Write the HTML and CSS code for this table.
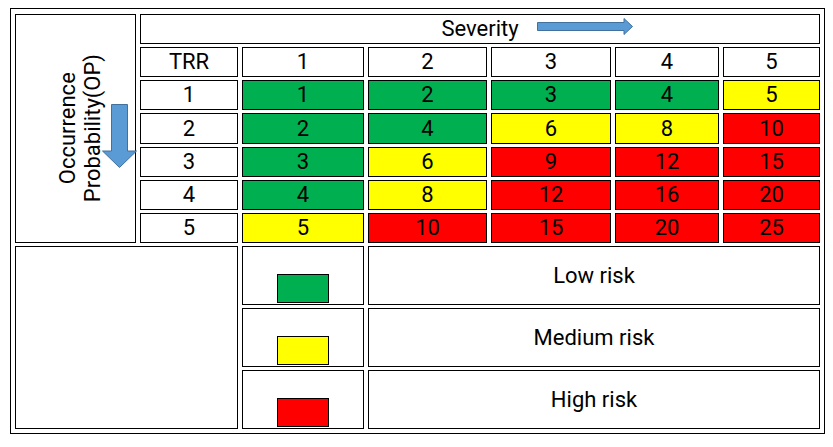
FILE: index.html
```html
<!DOCTYPE html>
<html lang="en">
<head>
<meta charset="utf-8">
<title>Risk matrix</title>
<link rel="stylesheet" href="styles.css">
</head>
<body>
<div class="frame">
  <div class="matrix">
    <div class="cell side">
      <div class="side-text">Occurrence<br>Probability(OP)</div>
      <svg class="down-arrow" width="35" height="64" viewBox="0 0 35 64"><polygon points="9.5,0.5 25.5,0.5 25.5,47 34.5,47 17.5,63.5 0.5,47 9.5,47" fill="#5b9bd5" stroke="#41719c" stroke-width="1"/></svg>
    </div>
    <div class="cell sev">Severity
      <svg class="right-arrow" width="96" height="17" viewBox="0 0 96 17"><polygon points="0.5,4.5 87,4.5 87,0.5 95.5,8.5 87,16.5 87,12.5 0.5,12.5" fill="#5b9bd5" stroke="#41719c" stroke-width="1"/></svg>
    </div>

    <div class="cell">TRR</div>
    <div class="cell">1</div>
    <div class="cell">2</div>
    <div class="cell">3</div>
    <div class="cell">4</div>
    <div class="cell">5</div>

    <div class="cell">1</div>
    <div class="cell g">1</div>
    <div class="cell g">2</div>
    <div class="cell g">3</div>
    <div class="cell g">4</div>
    <div class="cell y">5</div>

    <div class="cell">2</div>
    <div class="cell g">2</div>
    <div class="cell g">4</div>
    <div class="cell y">6</div>
    <div class="cell y">8</div>
    <div class="cell r">10</div>

    <div class="cell">3</div>
    <div class="cell g">3</div>
    <div class="cell y">6</div>
    <div class="cell r">9</div>
    <div class="cell r">12</div>
    <div class="cell r">15</div>

    <div class="cell">4</div>
    <div class="cell g">4</div>
    <div class="cell y">8</div>
    <div class="cell r">12</div>
    <div class="cell r">16</div>
    <div class="cell r">20</div>

    <div class="cell">5</div>
    <div class="cell y">5</div>
    <div class="cell r">10</div>
    <div class="cell r">15</div>
    <div class="cell r">20</div>
    <div class="cell r">25</div>

    <div class="cell blank"></div>
    <div class="cell key"><span class="swatch g"></span></div>
    <div class="cell label">Low risk</div>
    <div class="cell key"><span class="swatch y"></span></div>
    <div class="cell label">Medium risk</div>
    <div class="cell key"><span class="swatch r"></span></div>
    <div class="cell label">High risk</div>
  </div>
</div>
</body>
</html>
```

FILE: styles.css
```css
* { box-sizing: border-box; }

html, body {
  background: #ffffff;
}

body {
  margin: 8px 0 0 10px;
  font-family: Roboto, "Liberation Sans", Arial, sans-serif;
  font-size: 22px;
  color: #000000;
}

.frame {
  width: 815px;
  border: 1px solid #000000;
  padding: 5px 4px 4px 4px;
}

.matrix {
  display: grid;
  grid-template-columns: 121px 98px 122px 119px 120px 104px 97px;
  grid-template-rows: 30px 30px 30px 31px 30px 30px 30px 59px 59px 59px;
  column-gap: 4px;
  row-gap: 3px;
}

.cell {
  border: 1px solid #000000;
  display: flex;
  align-items: center;
  justify-content: center;
  line-height: 1;
  background: #ffffff;
}

.g { background: #00b050; }
.y { background: #ffff00; }
.r { background: #ff0000; }

.side {
  grid-column: 1;
  grid-row: 1 / span 7;
  position: relative;
  padding-left: 8px;
}

.side-text {
  writing-mode: vertical-rl;
  transform: rotate(180deg);
  line-height: 25px;
  text-align: center;
  white-space: nowrap;
}

.down-arrow {
  position: absolute;
  left: 86px;
  top: 89px;
  z-index: 2;
  overflow: visible;
}

.sev {
  grid-column: 2 / -1;
  grid-row: 1;
  position: relative;
}

.right-arrow {
  position: absolute;
  left: 396px;
  top: 3px;
}

.blank {
  grid-column: 1 / span 2;
  grid-row: 8 / span 3;
}

.key {
  align-items: flex-end;
  padding-bottom: 1px;
}

.swatch {
  display: block;
  width: 52px;
  height: 29px;
  border: 1px solid #000000;
}

.label {
  grid-column: 4 / -1;
}
```
